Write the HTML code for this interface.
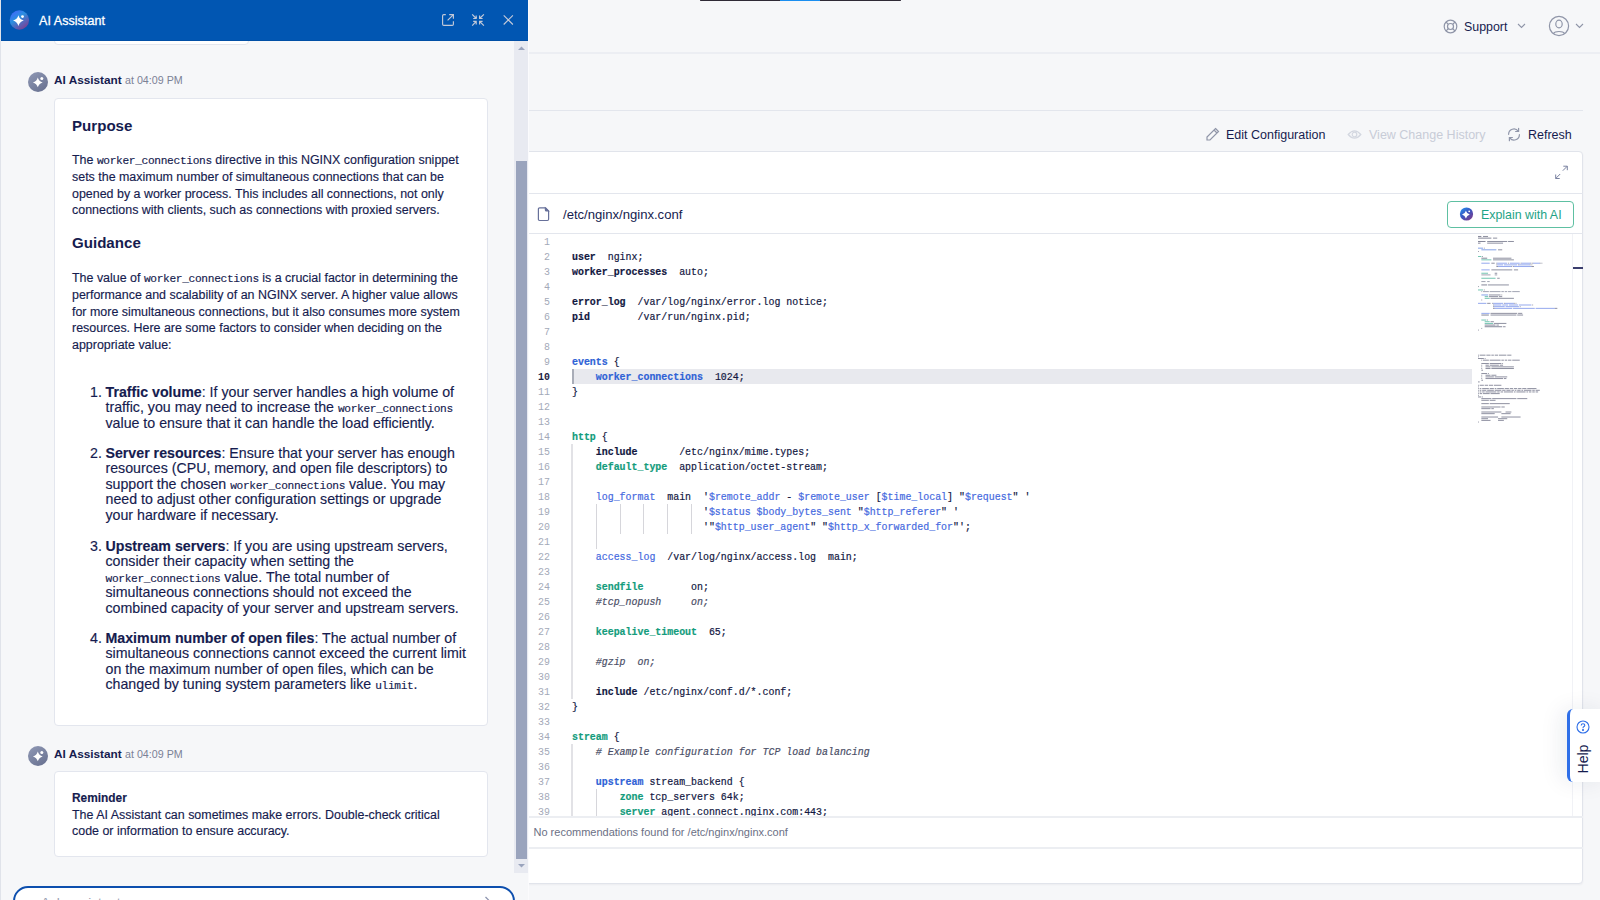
<!DOCTYPE html>
<html><head><meta charset="utf-8">
<style>
*{box-sizing:border-box;margin:0;padding:0}
html,body{width:1600px;height:900px;overflow:hidden;background:#f6f7f9;font-family:"Liberation Sans",sans-serif;color:#161c4f}
.abs{position:absolute}
.hl{position:absolute;height:1px;background:#e3e6ed}
/* main page */
#topbar{left:700px;top:0;width:201px;height:1px;background:#2f2a36;border-radius:1px}
#topbar i{position:absolute;left:80px;top:0;width:40px;height:1px;background:#1a8ef0}
.tbar{position:absolute;top:128px;font-size:12.5px;white-space:nowrap}
#card{left:400px;top:151px;width:1183px;height:733px;box-shadow:0 1px 2px rgba(30,40,80,0.05);background:#fff;border:1px solid #e1e4eb;border-radius:4px}
.mono{font-family:"Liberation Mono",monospace}
#code{position:absolute;left:0;top:234px;width:1600px}
.ln{position:absolute;left:520px;padding-top:1px;width:30px;text-align:right;font-size:11px;transform:scaleX(0.9018);transform-origin:100% 0;color:#a3a9b8;font-family:"Liberation Mono",monospace;line-height:15px}
.cl{position:absolute;left:571.9px;padding-top:1px;font-size:11px;font-family:"Liberation Mono",monospace;line-height:15px;white-space:pre;color:#12173f;transform:scaleX(0.9018);transform-origin:0 0;-webkit-text-stroke:0.2px currentColor}
.b{font-weight:bold}
.tB{font-weight:bold}
.tb{color:#4569e0}
.tbb{color:#2f62d6;font-weight:bold}
.tg{color:#139c7c;font-weight:bold}
.ts{color:#4569e0}
.tc{color:#4a4e66;font-style:italic}
.ln.cur{color:#1c2040;font-weight:bold}
#mm{position:absolute;left:1478px;top:233.8px}
.guide{position:absolute;width:1px;background:#d6d6db}
.guide.g0{width:2px;background:#e2e2e6}
/* panel */
#panel{position:absolute;left:0;top:0;width:529px;height:900px;background:#f6f7f9;border-left:1px solid #e0e3ea;border-right:1px solid #fbfbfd}
#phead{position:absolute;left:1px;top:0;width:527px;height:41px;background:#0156b2;border-bottom:1.5px solid #014fa6}
.card{position:absolute;background:#fff;border:1px solid #e3e6ee;border-radius:4px}
.pt{position:absolute;white-space:nowrap}
.c{font-family:"Liberation Mono",monospace;font-size:11.2px;letter-spacing:-0.33px}
.h{font-size:15.1px;font-weight:bold;color:#161c4f}
.para{font-size:12.45px;line-height:16.8px;color:#161c4f;-webkit-text-stroke:0.15px #161c4f}
.li{font-size:14.2px;line-height:15.4px;color:#161c4f;-webkit-text-stroke:0.15px #161c4f}
.li .c{font-size:11.2px}
.c{line-height:1px}
</style></head><body>
<!-- top bar -->
<div id="topbar" class="abs"><i></i></div>
<div class="hl" style="left:0;top:52px;width:1600px;height:2px;background:#eceef3"></div>
<div class="hl" style="left:0;top:110px;width:1583px"></div>

<!-- support / user -->
<svg class="abs" style="left:1443px;top:19px" width="15" height="15" viewBox="0 0 15 15" fill="none" stroke="#8f95a8" stroke-width="1.2"><circle cx="7.5" cy="7.5" r="6.3"/><circle cx="7.5" cy="7.5" r="3"/><path d="M3 3L5.3 5.3M12 3L9.7 5.3M3 12L5.3 9.7M12 12L9.7 9.7"/></svg>
<div class="pt" style="left:1464px;top:20px;font-size:12.4px;color:#161c4f">Support</div>
<svg class="abs" style="left:1517px;top:23px" width="9" height="6" viewBox="0 0 9 6" fill="none" stroke="#8f95a8" stroke-width="1.1"><path d="M1 1L4.5 4.5L8 1"/></svg>
<svg class="abs" style="left:1548px;top:15px" width="22" height="22" viewBox="0 0 22 22" fill="none" stroke="#8f95a8" stroke-width="1.2"><circle cx="11" cy="11" r="9.6"/><ellipse cx="11" cy="9" rx="3.2" ry="3.8"/><path d="M5.5 18.5C7 15.8 15 15.8 16.5 18.5"/></svg>
<svg class="abs" style="left:1575px;top:23px" width="9" height="6" viewBox="0 0 9 6" fill="none" stroke="#8f95a8" stroke-width="1.1"><path d="M1 1L4.5 4.5L8 1"/></svg>

<!-- toolbar -->
<svg class="abs" style="left:1205px;top:127px" width="15" height="15" viewBox="0 0 15 15" fill="none" stroke="#8f95a8" stroke-width="1.2"><path d="M10.5 1.5L13.5 4.5L5 13H2V10Z M9 3L12 6"/></svg>
<div class="tbar" style="left:1226px;color:#161c4f">Edit Configuration</div>
<svg class="abs" style="left:1347px;top:128px" width="15" height="13" viewBox="0 0 15 13" fill="none" stroke="#d3d7e0" stroke-width="1.2"><path d="M1.2 6.5Q7.5 -0.8 13.8 6.5Q7.5 13.8 1.2 6.5Z"/><circle cx="7.5" cy="6.5" r="2.3"/></svg>
<div class="tbar" style="left:1369px;color:#c8ccd7">View Change History</div>
<svg class="abs" style="left:1507px;top:127px" width="14" height="15" viewBox="0 0 14 15" fill="none" stroke="#9096aa" stroke-width="1.2" stroke-linecap="round"><path d="M1.6 7.3A5.3 5.3 0 0 1 11.2 4.2M12.4 7.7A5.3 5.3 0 0 1 2.8 10.8M11.6 1.3V4.5H8.6M2.4 13.7V10.5H5.4"/></svg>
<div class="tbar" style="left:1528px;color:#161c4f">Refresh</div>

<!-- card -->
<div id="card" class="abs"></div>
<div class="hl" style="left:400px;top:193px;width:1183px"></div>
<div class="hl" style="left:400px;top:233px;width:1183px"></div>
<svg class="abs" style="left:1553px;top:164px" width="16" height="16" viewBox="0 0 16 16" fill="none" stroke="#7a82a0" stroke-width="1"><path d="M10.3 2.2H14.3V6.2M14.3 2.2L9.8 6.7M6.7 14.5H2.7V10.5M2.7 14.5L7.2 10"/></svg>
<svg class="abs" style="left:537px;top:206px" width="13" height="16" viewBox="0 0 13 16" fill="none" stroke="#67709a" stroke-width="1.2"><path d="M2.6 1.9H8.6L11.6 4.9V13.3Q11.6 14.5 10.4 14.5H2.6Q1.4 14.5 1.4 13.3V3.1Q1.4 1.9 2.6 1.9Z"/><path d="M8.4 2.2V4Q8.4 5 9.4 5H11.3Z" fill="#67709a"/></svg>
<div class="pt" style="left:563px;top:207px;font-size:13.1px;color:#161c4f">/etc/nginx/nginx.conf</div>
<div class="abs" style="left:1447px;top:201px;width:127px;height:27px;border:1.6px solid #5ec0a2;border-radius:4px"></div>

<svg class="abs" style="left:1459px;top:207px" width="15" height="15" viewBox="0 0 15 15"><defs><linearGradient id="g3" x1="0.15" y1="0.1" x2="0.85" y2="0.95"><stop offset="0" stop-color="#2a86e6"/><stop offset="0.45" stop-color="#3b55c0"/><stop offset="1" stop-color="#7b3c8c"/></linearGradient></defs><circle cx="7.5" cy="7" r="6.6" fill="url(#g3)"/><path d="M6.90 3.70Q7.76 6.74 10.80 7.60Q7.76 8.46 6.90 11.50Q6.04 8.46 3.00 7.60Q6.04 6.74 6.90 3.70Z" fill="#fff"/><circle cx="10.2" cy="4.3" r="0.9" fill="#fff"/></svg>
<div class="pt" style="left:1481px;top:208px;font-size:12.4px;color:#1ea386">Explain with AI</div>

<div class="abs" style="left:572px;top:369px;width:900px;height:15px;background:#e8e9ee"></div>
<div class="abs" style="left:572px;top:369px;width:2px;height:15px;background:#a9adb8"></div>
<div class="guide g0" style="left:571px;top:444px;height:255px"></div>
<div class="guide" style="left:596px;top:504px;height:45px"></div>
<div class="guide" style="left:620px;top:504px;height:30px"></div>
<div class="guide" style="left:643px;top:504px;height:30px"></div>
<div class="guide" style="left:667px;top:504px;height:30px"></div>
<div class="guide" style="left:691px;top:504px;height:30px"></div>
<div class="guide g0" style="left:571px;top:744px;height:75px"></div>
<div class="guide" style="left:596px;top:789px;height:30px"></div>
<div class="ln" style="top:234px">1</div>
<div class="ln" style="top:249px">2</div>
<div class="cl" style="top:249px"><span class="tB">user</span>  nginx;</div>
<div class="ln" style="top:264px">3</div>
<div class="cl" style="top:264px"><span class="tB">worker_processes</span>  auto;</div>
<div class="ln" style="top:279px">4</div>
<div class="ln" style="top:294px">5</div>
<div class="cl" style="top:294px"><span class="tB">error_log</span>  /var/log/nginx/error.log notice;</div>
<div class="ln" style="top:309px">6</div>
<div class="cl" style="top:309px"><span class="tB">pid</span>        /var/run/nginx.pid;</div>
<div class="ln" style="top:324px">7</div>
<div class="ln" style="top:339px">8</div>
<div class="ln" style="top:354px">9</div>
<div class="cl" style="top:354px"><span class="tbb">events</span> {</div>
<div class="ln cur" style="top:369px">10</div>
<div class="cl" style="top:369px">    <span class="tbb">worker_connections</span>  1024;</div>
<div class="ln" style="top:384px">11</div>
<div class="cl" style="top:384px">}</div>
<div class="ln" style="top:399px">12</div>
<div class="ln" style="top:414px">13</div>
<div class="ln" style="top:429px">14</div>
<div class="cl" style="top:429px"><span class="tg">http</span> {</div>
<div class="ln" style="top:444px">15</div>
<div class="cl" style="top:444px">    <span class="tB">include</span>       /etc/nginx/mime.types;</div>
<div class="ln" style="top:459px">16</div>
<div class="cl" style="top:459px">    <span class="tg">default_type</span>  application/octet-stream;</div>
<div class="ln" style="top:474px">17</div>
<div class="ln" style="top:489px">18</div>
<div class="cl" style="top:489px">    <span class="tb">log_format</span>  main  '<span class="ts">$remote_addr</span> - <span class="ts">$remote_user</span> [<span class="ts">$time_local</span>] "<span class="ts">$request</span>" '</div>
<div class="ln" style="top:504px">19</div>
<div class="cl" style="top:504px">                      '<span class="ts">$status</span> <span class="ts">$body_bytes_sent</span> "<span class="ts">$http_referer</span>" '</div>
<div class="ln" style="top:519px">20</div>
<div class="cl" style="top:519px">                      '"<span class="ts">$http_user_agent</span>" "<span class="ts">$http_x_forwarded_for</span>"';</div>
<div class="ln" style="top:534px">21</div>
<div class="ln" style="top:549px">22</div>
<div class="cl" style="top:549px">    <span class="tb">access_log</span>  /var/log/nginx/access.log  main;</div>
<div class="ln" style="top:564px">23</div>
<div class="ln" style="top:579px">24</div>
<div class="cl" style="top:579px">    <span class="tg">sendfile</span>        on;</div>
<div class="ln" style="top:594px">25</div>
<div class="cl" style="top:594px">    <span class="tc">#tcp_nopush     on;</span></div>
<div class="ln" style="top:609px">26</div>
<div class="ln" style="top:624px">27</div>
<div class="cl" style="top:624px">    <span class="tg">keepalive_timeout</span>  65;</div>
<div class="ln" style="top:639px">28</div>
<div class="ln" style="top:654px">29</div>
<div class="cl" style="top:654px">    <span class="tc">#gzip  on;</span></div>
<div class="ln" style="top:669px">30</div>
<div class="ln" style="top:684px">31</div>
<div class="cl" style="top:684px">    <span class="tB">include</span> /etc/nginx/conf.d/*.conf;</div>
<div class="ln" style="top:699px">32</div>
<div class="cl" style="top:699px">}</div>
<div class="ln" style="top:714px">33</div>
<div class="ln" style="top:729px">34</div>
<div class="cl" style="top:729px"><span class="tg">stream</span> {</div>
<div class="ln" style="top:744px">35</div>
<div class="cl" style="top:744px">    <span class="tc"># Example configuration for TCP load balancing</span></div>
<div class="ln" style="top:759px">36</div>
<div class="ln" style="top:774px">37</div>
<div class="cl" style="top:774px">    <span class="tbb">upstream</span> stream_backend {</div>
<div class="ln" style="top:789px">38</div>
<div class="cl" style="top:789px">        <span class="tg">zone</span> tcp_servers 64k;</div>
<div class="ln" style="top:804px">39</div>
<div class="cl" style="top:804px">        <span class="tg">server</span> agent.connect.nginx.com:443;</div>
<svg id="mm" width="120" height="200" viewBox="0 0 120 200" shape-rendering="geometricPrecision"><rect x="0.00" y="1.97" width="3.34" height="0.95" fill="rgba(22,26,60,0.55)"/><rect x="5.01" y="1.97" width="5.01" height="0.95" fill="rgba(22,26,60,0.5)"/><rect x="0.00" y="3.64" width="13.36" height="0.95" fill="rgba(22,26,60,0.55)"/><rect x="15.03" y="3.64" width="4.17" height="0.95" fill="rgba(22,26,60,0.5)"/><rect x="0.00" y="6.99" width="7.51" height="0.95" fill="rgba(22,26,60,0.55)"/><rect x="9.18" y="6.99" width="20.04" height="0.95" fill="rgba(22,26,60,0.5)"/><rect x="30.06" y="6.99" width="5.84" height="0.95" fill="rgba(22,26,60,0.5)"/><rect x="0.00" y="8.66" width="2.50" height="0.95" fill="rgba(22,26,60,0.55)"/><rect x="9.18" y="8.66" width="15.86" height="0.95" fill="rgba(22,26,60,0.5)"/><rect x="0.00" y="13.68" width="5.01" height="0.95" fill="rgba(47,98,214,0.62)"/><rect x="5.84" y="13.68" width="0.83" height="0.95" fill="rgba(22,26,60,0.5)"/><rect x="3.34" y="15.35" width="15.03" height="0.95" fill="rgba(47,98,214,0.62)"/><rect x="20.04" y="15.35" width="4.17" height="0.95" fill="rgba(22,26,60,0.5)"/><rect x="0.00" y="17.02" width="0.83" height="0.95" fill="rgba(22,26,60,0.5)"/><rect x="0.00" y="22.04" width="3.34" height="0.95" fill="rgba(19,156,124,0.62)"/><rect x="4.17" y="22.04" width="0.83" height="0.95" fill="rgba(22,26,60,0.5)"/><rect x="3.34" y="23.71" width="5.84" height="0.95" fill="rgba(22,26,60,0.55)"/><rect x="15.03" y="23.71" width="18.37" height="0.95" fill="rgba(22,26,60,0.5)"/><rect x="3.34" y="25.38" width="10.02" height="0.95" fill="rgba(19,156,124,0.62)"/><rect x="15.03" y="25.38" width="20.88" height="0.95" fill="rgba(22,26,60,0.5)"/><rect x="3.34" y="28.72" width="8.35" height="0.95" fill="rgba(70,105,225,0.6)"/><rect x="13.36" y="28.72" width="3.34" height="0.95" fill="rgba(22,26,60,0.5)"/><rect x="18.37" y="28.72" width="0.83" height="0.95" fill="rgba(22,26,60,0.5)"/><rect x="19.20" y="28.72" width="10.02" height="0.95" fill="rgba(70,105,225,0.6)"/><rect x="30.06" y="28.72" width="0.83" height="0.95" fill="rgba(22,26,60,0.5)"/><rect x="31.73" y="28.72" width="10.02" height="0.95" fill="rgba(70,105,225,0.6)"/><rect x="42.59" y="28.72" width="0.83" height="0.95" fill="rgba(22,26,60,0.5)"/><rect x="43.42" y="28.72" width="9.18" height="0.95" fill="rgba(70,105,225,0.6)"/><rect x="52.60" y="28.72" width="0.83" height="0.95" fill="rgba(22,26,60,0.5)"/><rect x="54.27" y="28.72" width="0.83" height="0.95" fill="rgba(22,26,60,0.5)"/><rect x="55.11" y="28.72" width="6.68" height="0.95" fill="rgba(70,105,225,0.6)"/><rect x="61.79" y="28.72" width="0.83" height="0.95" fill="rgba(22,26,60,0.5)"/><rect x="63.46" y="28.72" width="0.83" height="0.95" fill="rgba(22,26,60,0.5)"/><rect x="18.37" y="30.40" width="0.83" height="0.95" fill="rgba(22,26,60,0.5)"/><rect x="19.20" y="30.40" width="5.84" height="0.95" fill="rgba(70,105,225,0.6)"/><rect x="25.88" y="30.40" width="13.36" height="0.95" fill="rgba(70,105,225,0.6)"/><rect x="40.08" y="30.40" width="0.83" height="0.95" fill="rgba(22,26,60,0.5)"/><rect x="40.91" y="30.40" width="10.86" height="0.95" fill="rgba(70,105,225,0.6)"/><rect x="51.77" y="30.40" width="0.83" height="0.95" fill="rgba(22,26,60,0.5)"/><rect x="53.44" y="30.40" width="0.83" height="0.95" fill="rgba(22,26,60,0.5)"/><rect x="18.37" y="32.07" width="1.67" height="0.95" fill="rgba(22,26,60,0.5)"/><rect x="20.04" y="32.07" width="13.36" height="0.95" fill="rgba(70,105,225,0.6)"/><rect x="33.40" y="32.07" width="0.83" height="0.95" fill="rgba(22,26,60,0.5)"/><rect x="35.07" y="32.07" width="0.83" height="0.95" fill="rgba(22,26,60,0.5)"/><rect x="35.91" y="32.07" width="17.54" height="0.95" fill="rgba(70,105,225,0.6)"/><rect x="53.44" y="32.07" width="2.50" height="0.95" fill="rgba(22,26,60,0.5)"/><rect x="3.34" y="35.41" width="8.35" height="0.95" fill="rgba(70,105,225,0.6)"/><rect x="13.36" y="35.41" width="20.88" height="0.95" fill="rgba(22,26,60,0.5)"/><rect x="35.91" y="35.41" width="4.17" height="0.95" fill="rgba(22,26,60,0.5)"/><rect x="3.34" y="38.76" width="6.68" height="0.95" fill="rgba(19,156,124,0.62)"/><rect x="16.70" y="38.76" width="2.50" height="0.95" fill="rgba(22,26,60,0.5)"/><rect x="3.34" y="40.43" width="9.18" height="0.95" fill="rgba(60,65,95,0.5)"/><rect x="16.70" y="40.43" width="2.50" height="0.95" fill="rgba(60,65,95,0.5)"/><rect x="3.34" y="43.77" width="14.20" height="0.95" fill="rgba(19,156,124,0.62)"/><rect x="19.20" y="43.77" width="2.50" height="0.95" fill="rgba(22,26,60,0.5)"/><rect x="3.34" y="47.12" width="4.17" height="0.95" fill="rgba(60,65,95,0.5)"/><rect x="9.18" y="47.12" width="2.50" height="0.95" fill="rgba(60,65,95,0.5)"/><rect x="3.34" y="50.46" width="5.84" height="0.95" fill="rgba(22,26,60,0.55)"/><rect x="10.02" y="50.46" width="20.88" height="0.95" fill="rgba(22,26,60,0.5)"/><rect x="0.00" y="52.13" width="0.83" height="0.95" fill="rgba(22,26,60,0.5)"/><rect x="0.00" y="55.48" width="5.01" height="0.95" fill="rgba(19,156,124,0.62)"/><rect x="5.84" y="55.48" width="0.83" height="0.95" fill="rgba(22,26,60,0.5)"/><rect x="3.34" y="57.15" width="0.83" height="0.95" fill="rgba(60,65,95,0.5)"/><rect x="5.01" y="57.15" width="5.84" height="0.95" fill="rgba(60,65,95,0.5)"/><rect x="11.69" y="57.15" width="10.86" height="0.95" fill="rgba(60,65,95,0.5)"/><rect x="23.38" y="57.15" width="2.50" height="0.95" fill="rgba(60,65,95,0.5)"/><rect x="26.72" y="57.15" width="2.50" height="0.95" fill="rgba(60,65,95,0.5)"/><rect x="30.06" y="57.15" width="3.34" height="0.95" fill="rgba(60,65,95,0.5)"/><rect x="34.23" y="57.15" width="7.51" height="0.95" fill="rgba(60,65,95,0.5)"/><rect x="3.34" y="60.49" width="6.68" height="0.95" fill="rgba(47,98,214,0.62)"/><rect x="10.86" y="60.49" width="11.69" height="0.95" fill="rgba(22,26,60,0.5)"/><rect x="23.38" y="60.49" width="0.83" height="0.95" fill="rgba(22,26,60,0.5)"/><rect x="6.68" y="62.16" width="3.34" height="0.95" fill="rgba(19,156,124,0.62)"/><rect x="10.86" y="62.16" width="9.18" height="0.95" fill="rgba(22,26,60,0.5)"/><rect x="20.88" y="62.16" width="3.34" height="0.95" fill="rgba(22,26,60,0.5)"/><rect x="6.68" y="63.84" width="5.01" height="0.95" fill="rgba(19,156,124,0.62)"/><rect x="12.52" y="63.84" width="23.38" height="0.95" fill="rgba(22,26,60,0.5)"/><rect x="3.34" y="65.51" width="0.83" height="0.95" fill="rgba(22,26,60,0.5)"/><rect x="0.00" y="68.85" width="8.35" height="0.95" fill="rgba(70,105,225,0.6)"/><rect x="9.18" y="68.85" width="3.34" height="0.95" fill="rgba(22,26,60,0.5)"/><rect x="14.20" y="68.85" width="0.83" height="0.95" fill="rgba(22,26,60,0.5)"/><rect x="15.03" y="68.85" width="10.02" height="0.95" fill="rgba(70,105,225,0.6)"/><rect x="25.88" y="68.85" width="0.83" height="0.95" fill="rgba(22,26,60,0.5)"/><rect x="26.72" y="68.85" width="9.18" height="0.95" fill="rgba(70,105,225,0.6)"/><rect x="35.91" y="68.85" width="0.83" height="0.95" fill="rgba(22,26,60,0.5)"/><rect x="37.57" y="68.85" width="0.83" height="0.95" fill="rgba(22,26,60,0.5)"/><rect x="15.03" y="70.52" width="0.83" height="0.95" fill="rgba(22,26,60,0.5)"/><rect x="15.86" y="70.52" width="7.51" height="0.95" fill="rgba(70,105,225,0.6)"/><rect x="24.21" y="70.52" width="5.84" height="0.95" fill="rgba(70,105,225,0.6)"/><rect x="30.89" y="70.52" width="9.18" height="0.95" fill="rgba(70,105,225,0.6)"/><rect x="40.91" y="70.52" width="12.52" height="0.95" fill="rgba(70,105,225,0.6)"/><rect x="54.27" y="70.52" width="0.83" height="0.95" fill="rgba(22,26,60,0.5)"/><rect x="15.03" y="72.20" width="0.83" height="0.95" fill="rgba(22,26,60,0.5)"/><rect x="15.86" y="72.20" width="10.86" height="0.95" fill="rgba(70,105,225,0.6)"/><rect x="27.55" y="72.20" width="13.36" height="0.95" fill="rgba(70,105,225,0.6)"/><rect x="41.75" y="72.20" width="0.83" height="0.95" fill="rgba(22,26,60,0.5)"/><rect x="15.03" y="73.87" width="1.67" height="0.95" fill="rgba(22,26,60,0.5)"/><rect x="16.70" y="73.87" width="17.54" height="0.95" fill="rgba(70,105,225,0.6)"/><rect x="35.07" y="73.87" width="21.71" height="0.95" fill="rgba(70,105,225,0.6)"/><rect x="57.61" y="73.87" width="19.20" height="0.95" fill="rgba(70,105,225,0.6)"/><rect x="76.82" y="73.87" width="2.50" height="0.95" fill="rgba(22,26,60,0.5)"/><rect x="3.34" y="78.88" width="8.35" height="0.95" fill="rgba(70,105,225,0.6)"/><rect x="12.52" y="78.88" width="26.72" height="0.95" fill="rgba(22,26,60,0.5)"/><rect x="40.08" y="78.88" width="4.17" height="0.95" fill="rgba(22,26,60,0.5)"/><rect x="3.34" y="80.56" width="7.51" height="0.95" fill="rgba(22,26,60,0.55)"/><rect x="12.52" y="80.56" width="25.88" height="0.95" fill="rgba(22,26,60,0.5)"/><rect x="39.24" y="80.56" width="5.84" height="0.95" fill="rgba(22,26,60,0.5)"/><rect x="3.34" y="85.57" width="5.01" height="0.95" fill="rgba(19,156,124,0.62)"/><rect x="9.18" y="85.57" width="0.83" height="0.95" fill="rgba(22,26,60,0.5)"/><rect x="6.68" y="87.24" width="5.01" height="0.95" fill="rgba(19,156,124,0.62)"/><rect x="12.52" y="87.24" width="3.34" height="0.95" fill="rgba(22,26,60,0.5)"/><rect x="6.68" y="88.92" width="8.35" height="0.95" fill="rgba(19,156,124,0.62)"/><rect x="15.86" y="88.92" width="12.52" height="0.95" fill="rgba(22,26,60,0.5)"/><rect x="6.68" y="90.59" width="10.86" height="0.95" fill="rgba(22,26,60,0.55)"/><rect x="18.37" y="90.59" width="2.50" height="0.95" fill="rgba(22,26,60,0.5)"/><rect x="6.68" y="92.26" width="17.54" height="0.95" fill="rgba(22,26,60,0.55)"/><rect x="25.05" y="92.26" width="2.50" height="0.95" fill="rgba(22,26,60,0.5)"/><rect x="3.34" y="93.93" width="0.83" height="0.95" fill="rgba(22,26,60,0.5)"/><rect x="0.00" y="95.60" width="0.83" height="0.95" fill="rgba(22,26,60,0.5)"/><rect x="0.00" y="120.68" width="0.83" height="0.95" fill="rgba(22,26,60,0.5)"/><rect x="1.67" y="120.68" width="5.84" height="0.95" fill="rgba(22,26,60,0.5)"/><rect x="8.35" y="120.68" width="4.17" height="0.95" fill="rgba(22,26,60,0.5)"/><rect x="13.36" y="120.68" width="2.50" height="0.95" fill="rgba(22,26,60,0.5)"/><rect x="16.70" y="120.68" width="3.34" height="0.95" fill="rgba(22,26,60,0.5)"/><rect x="20.88" y="120.68" width="7.51" height="0.95" fill="rgba(22,26,60,0.5)"/><rect x="29.22" y="120.68" width="4.17" height="0.95" fill="rgba(22,26,60,0.5)"/><rect x="0.00" y="122.36" width="0.83" height="0.95" fill="rgba(22,26,60,0.5)"/><rect x="0.00" y="124.03" width="5.84" height="0.95" fill="rgba(22,26,60,0.5)"/><rect x="6.68" y="124.03" width="0.83" height="0.95" fill="rgba(22,26,60,0.5)"/><rect x="3.34" y="125.70" width="0.83" height="0.95" fill="rgba(22,26,60,0.5)"/><rect x="5.01" y="125.70" width="5.84" height="0.95" fill="rgba(22,26,60,0.5)"/><rect x="11.69" y="125.70" width="10.86" height="0.95" fill="rgba(22,26,60,0.5)"/><rect x="23.38" y="125.70" width="2.50" height="0.95" fill="rgba(22,26,60,0.5)"/><rect x="26.72" y="125.70" width="2.50" height="0.95" fill="rgba(22,26,60,0.5)"/><rect x="30.06" y="125.70" width="3.34" height="0.95" fill="rgba(22,26,60,0.5)"/><rect x="34.23" y="125.70" width="7.51" height="0.95" fill="rgba(22,26,60,0.5)"/><rect x="3.34" y="129.04" width="7.51" height="0.95" fill="rgba(22,26,60,0.5)"/><rect x="11.69" y="129.04" width="11.69" height="0.95" fill="rgba(22,26,60,0.5)"/><rect x="24.21" y="129.04" width="0.83" height="0.95" fill="rgba(22,26,60,0.5)"/><rect x="3.34" y="130.72" width="0.83" height="0.95" fill="rgba(22,26,60,0.5)"/><rect x="7.51" y="130.72" width="3.34" height="0.95" fill="rgba(22,26,60,0.5)"/><rect x="11.69" y="130.72" width="9.18" height="0.95" fill="rgba(22,26,60,0.5)"/><rect x="21.71" y="130.72" width="3.34" height="0.95" fill="rgba(22,26,60,0.5)"/><rect x="3.34" y="132.39" width="0.83" height="0.95" fill="rgba(22,26,60,0.5)"/><rect x="7.51" y="132.39" width="5.01" height="0.95" fill="rgba(22,26,60,0.5)"/><rect x="13.36" y="132.39" width="22.54" height="0.95" fill="rgba(22,26,60,0.5)"/><rect x="3.34" y="134.06" width="0.83" height="0.95" fill="rgba(22,26,60,0.5)"/><rect x="7.51" y="134.06" width="5.01" height="0.95" fill="rgba(22,26,60,0.5)"/><rect x="13.36" y="134.06" width="22.54" height="0.95" fill="rgba(22,26,60,0.5)"/><rect x="3.34" y="135.73" width="1.67" height="0.95" fill="rgba(22,26,60,0.5)"/><rect x="3.34" y="139.08" width="5.84" height="0.95" fill="rgba(22,26,60,0.5)"/><rect x="10.02" y="139.08" width="0.83" height="0.95" fill="rgba(22,26,60,0.5)"/><rect x="3.34" y="140.75" width="0.83" height="0.95" fill="rgba(22,26,60,0.5)"/><rect x="7.51" y="140.75" width="5.01" height="0.95" fill="rgba(22,26,60,0.5)"/><rect x="13.36" y="140.75" width="5.01" height="0.95" fill="rgba(22,26,60,0.5)"/><rect x="3.34" y="142.42" width="0.83" height="0.95" fill="rgba(22,26,60,0.5)"/><rect x="7.51" y="142.42" width="8.35" height="0.95" fill="rgba(22,26,60,0.5)"/><rect x="16.70" y="142.42" width="12.52" height="0.95" fill="rgba(22,26,60,0.5)"/><rect x="3.34" y="144.09" width="0.83" height="0.95" fill="rgba(22,26,60,0.5)"/><rect x="7.51" y="144.09" width="17.54" height="0.95" fill="rgba(22,26,60,0.5)"/><rect x="25.88" y="144.09" width="2.50" height="0.95" fill="rgba(22,26,60,0.5)"/><rect x="3.34" y="145.76" width="1.67" height="0.95" fill="rgba(22,26,60,0.5)"/><rect x="0.00" y="147.44" width="1.67" height="0.95" fill="rgba(22,26,60,0.5)"/><rect x="0.00" y="150.78" width="0.83" height="0.95" fill="rgba(22,26,60,0.5)"/><rect x="1.67" y="150.78" width="4.17" height="0.95" fill="rgba(22,26,60,0.5)"/><rect x="6.68" y="150.78" width="3.34" height="0.95" fill="rgba(22,26,60,0.5)"/><rect x="10.86" y="150.78" width="4.17" height="0.95" fill="rgba(22,26,60,0.5)"/><rect x="15.86" y="150.78" width="7.51" height="0.95" fill="rgba(22,26,60,0.5)"/><rect x="0.00" y="152.45" width="0.83" height="0.95" fill="rgba(22,26,60,0.5)"/><rect x="0.00" y="154.12" width="0.83" height="0.95" fill="rgba(22,26,60,0.5)"/><rect x="1.67" y="154.12" width="1.67" height="0.95" fill="rgba(22,26,60,0.5)"/><rect x="4.17" y="154.12" width="6.68" height="0.95" fill="rgba(22,26,60,0.5)"/><rect x="11.69" y="154.12" width="4.17" height="0.95" fill="rgba(22,26,60,0.5)"/><rect x="16.70" y="154.12" width="1.67" height="0.95" fill="rgba(22,26,60,0.5)"/><rect x="19.20" y="154.12" width="6.68" height="0.95" fill="rgba(22,26,60,0.5)"/><rect x="26.72" y="154.12" width="4.17" height="0.95" fill="rgba(22,26,60,0.5)"/><rect x="31.73" y="154.12" width="3.34" height="0.95" fill="rgba(22,26,60,0.5)"/><rect x="35.91" y="154.12" width="3.34" height="0.95" fill="rgba(22,26,60,0.5)"/><rect x="40.08" y="154.12" width="3.34" height="0.95" fill="rgba(22,26,60,0.5)"/><rect x="44.25" y="154.12" width="4.17" height="0.95" fill="rgba(22,26,60,0.5)"/><rect x="49.27" y="154.12" width="9.18" height="0.95" fill="rgba(22,26,60,0.5)"/><rect x="0.00" y="155.80" width="0.83" height="0.95" fill="rgba(22,26,60,0.5)"/><rect x="1.67" y="155.80" width="1.67" height="0.95" fill="rgba(22,26,60,0.5)"/><rect x="4.17" y="155.80" width="4.17" height="0.95" fill="rgba(22,26,60,0.5)"/><rect x="9.18" y="155.80" width="6.68" height="0.95" fill="rgba(22,26,60,0.5)"/><rect x="16.70" y="155.80" width="6.68" height="0.95" fill="rgba(22,26,60,0.5)"/><rect x="24.21" y="155.80" width="3.34" height="0.95" fill="rgba(22,26,60,0.5)"/><rect x="28.39" y="155.80" width="4.17" height="0.95" fill="rgba(22,26,60,0.5)"/><rect x="33.40" y="155.80" width="2.50" height="0.95" fill="rgba(22,26,60,0.5)"/><rect x="36.74" y="155.80" width="1.67" height="0.95" fill="rgba(22,26,60,0.5)"/><rect x="39.24" y="155.80" width="3.34" height="0.95" fill="rgba(22,26,60,0.5)"/><rect x="43.42" y="155.80" width="1.67" height="0.95" fill="rgba(22,26,60,0.5)"/><rect x="45.92" y="155.80" width="7.51" height="0.95" fill="rgba(22,26,60,0.5)"/><rect x="54.27" y="155.80" width="2.50" height="0.95" fill="rgba(22,26,60,0.5)"/><rect x="57.61" y="155.80" width="4.17" height="0.95" fill="rgba(22,26,60,0.5)"/><rect x="0.00" y="157.47" width="0.83" height="0.95" fill="rgba(22,26,60,0.5)"/><rect x="1.67" y="157.47" width="1.67" height="0.95" fill="rgba(22,26,60,0.5)"/><rect x="4.17" y="157.47" width="2.50" height="0.95" fill="rgba(22,26,60,0.5)"/><rect x="7.51" y="157.47" width="10.86" height="0.95" fill="rgba(22,26,60,0.5)"/><rect x="19.20" y="157.47" width="2.50" height="0.95" fill="rgba(22,26,60,0.5)"/><rect x="22.54" y="157.47" width="2.50" height="0.95" fill="rgba(22,26,60,0.5)"/><rect x="25.88" y="157.47" width="9.18" height="0.95" fill="rgba(22,26,60,0.5)"/><rect x="35.91" y="157.47" width="1.67" height="0.95" fill="rgba(22,26,60,0.5)"/><rect x="38.41" y="157.47" width="9.18" height="0.95" fill="rgba(22,26,60,0.5)"/><rect x="48.43" y="157.47" width="1.67" height="0.95" fill="rgba(22,26,60,0.5)"/><rect x="50.93" y="157.47" width="2.50" height="0.95" fill="rgba(22,26,60,0.5)"/><rect x="54.27" y="157.47" width="2.50" height="0.95" fill="rgba(22,26,60,0.5)"/><rect x="57.61" y="157.47" width="2.50" height="0.95" fill="rgba(22,26,60,0.5)"/><rect x="0.00" y="159.14" width="0.83" height="0.95" fill="rgba(22,26,60,0.5)"/><rect x="1.67" y="159.14" width="2.50" height="0.95" fill="rgba(22,26,60,0.5)"/><rect x="5.01" y="159.14" width="6.68" height="0.95" fill="rgba(22,26,60,0.5)"/><rect x="12.52" y="159.14" width="9.18" height="0.95" fill="rgba(22,26,60,0.5)"/><rect x="0.00" y="160.81" width="0.83" height="0.95" fill="rgba(22,26,60,0.5)"/><rect x="0.00" y="162.48" width="3.34" height="0.95" fill="rgba(22,26,60,0.5)"/><rect x="4.17" y="162.48" width="0.83" height="0.95" fill="rgba(22,26,60,0.5)"/><rect x="3.34" y="164.16" width="10.02" height="0.95" fill="rgba(22,26,60,0.5)"/><rect x="14.20" y="164.16" width="24.21" height="0.95" fill="rgba(22,26,60,0.5)"/><rect x="39.24" y="164.16" width="10.02" height="0.95" fill="rgba(22,26,60,0.5)"/><rect x="3.34" y="165.83" width="7.51" height="0.95" fill="rgba(22,26,60,0.5)"/><rect x="11.69" y="165.83" width="5.84" height="0.95" fill="rgba(22,26,60,0.5)"/><rect x="3.34" y="169.17" width="7.51" height="0.95" fill="rgba(22,26,60,0.5)"/><rect x="11.69" y="169.17" width="20.04" height="0.95" fill="rgba(22,26,60,0.5)"/><rect x="3.34" y="172.52" width="19.20" height="0.95" fill="rgba(22,26,60,0.5)"/><rect x="23.38" y="172.52" width="3.34" height="0.95" fill="rgba(22,26,60,0.5)"/><rect x="3.34" y="174.19" width="9.18" height="0.95" fill="rgba(22,26,60,0.5)"/><rect x="13.36" y="174.19" width="2.50" height="0.95" fill="rgba(22,26,60,0.5)"/><rect x="3.34" y="177.53" width="20.04" height="0.95" fill="rgba(22,26,60,0.5)"/><rect x="27.55" y="177.53" width="5.84" height="0.95" fill="rgba(22,26,60,0.5)"/><rect x="3.34" y="179.20" width="13.36" height="0.95" fill="rgba(22,26,60,0.5)"/><rect x="23.38" y="179.20" width="9.18" height="0.95" fill="rgba(22,26,60,0.5)"/><rect x="3.34" y="182.55" width="16.70" height="0.95" fill="rgba(22,26,60,0.5)"/><rect x="23.38" y="182.55" width="19.20" height="0.95" fill="rgba(22,26,60,0.5)"/><rect x="3.34" y="184.22" width="6.68" height="0.95" fill="rgba(22,26,60,0.5)"/><rect x="20.04" y="184.22" width="9.18" height="0.95" fill="rgba(22,26,60,0.5)"/><rect x="3.34" y="185.89" width="9.18" height="0.95" fill="rgba(22,26,60,0.5)"/><rect x="20.04" y="185.89" width="5.84" height="0.95" fill="rgba(22,26,60,0.5)"/><rect x="0.00" y="187.56" width="0.83" height="0.95" fill="rgba(22,26,60,0.5)"/></svg>

<div class="abs" style="left:400px;top:816px;width:1172px;height:32px;background:#fff"></div>
<div class="hl" style="left:400px;top:816px;width:1183px;height:2px;background:#eceef2"></div>
<div class="pt" style="left:533.5px;top:826px;font-size:11px;color:#6b7085">No recommendations found for /etc/nginx/nginx.conf</div>
<div class="hl" style="left:400px;top:847px;width:1183px;height:2px;background:#eceef2"></div>

<div class="abs" style="left:1572px;top:234px;width:1px;height:582px;background:#f1f2f6"></div>
<div class="abs" style="left:1573px;top:267.3px;width:10px;height:1.6px;background:#3b3e6e"></div>
<!-- help tab -->
<div class="abs" style="left:1567px;top:709px;width:40px;height:73px;background:#fff;border-left:3px solid #2f6fe8;border-radius:6px 0 0 6px;box-shadow:-6px 0 22px rgba(30,40,80,0.08)"></div>
<svg class="abs" style="left:1576px;top:720px" width="14" height="14" viewBox="0 0 14 14" fill="none" stroke="#2f6fe8" stroke-width="1.1"><circle cx="7" cy="7" r="6"/><path d="M5.2 5.4Q5.2 3.7 7 3.7Q8.8 3.7 8.8 5.3Q8.8 6.3 7.6 6.8Q7 7.1 7 8.2"/><circle cx="7" cy="10" r="0.5" fill="#2f6fe8"/></svg>
<div class="pt" style="left:1568px;top:751px;font-size:14px;color:#161c4f;transform:rotate(-90deg);transform-origin:center;width:30px;text-align:center">Help</div>

<!-- PANEL -->
<div id="panel"></div>
<!-- partial previous card -->
<div class="card" style="left:54px;top:-10px;width:195px;height:55px"></div>
<div id="phead"></div>
<svg class="abs" style="left:9px;top:10px" width="21" height="21" viewBox="0 0 21 21"><defs><linearGradient id="g1" x1="0.2" y1="0.1" x2="0.8" y2="0.95"><stop offset="0" stop-color="#3d6ff5"/><stop offset="0.35" stop-color="#2b8fe0"/><stop offset="0.7" stop-color="#5a62b8"/><stop offset="1" stop-color="#7a3f90"/></linearGradient></defs><circle cx="10.4" cy="10" r="9.7" fill="url(#g1)"/><path d="M9.40 5.20Q10.59 9.41 14.80 10.60Q10.59 11.79 9.40 16.00Q8.21 11.79 4.00 10.60Q8.21 9.41 9.40 5.20Z" fill="#fff"/><circle cx="13.5" cy="6.6" r="1.45" fill="#fff"/></svg>
<div class="pt" style="left:39px;top:14px;font-size:12.5px;color:#fff;letter-spacing:0.05px;-webkit-text-stroke:0.3px #fff">AI Assistant</div>
<svg class="abs" style="left:441px;top:13px" width="14" height="14" viewBox="0 0 14 14" fill="none" stroke="#c3c9d8" stroke-width="1.15"><path d="M4.8 1.6H2.8Q1.6 1.6 1.6 2.8V11.2Q1.6 12.4 2.8 12.4H11.2Q12.4 12.4 12.4 11.2V8.2"/><path d="M8.2 1.6H12.4V5.8M12.4 1.6L6.6 7.4"/></svg>
<svg class="abs" style="left:471px;top:13px" width="14" height="14" viewBox="0 0 14 14" fill="none" stroke="#c3c9d8" stroke-width="1.15"><path d="M1.2 1.3L5.2 5.5M2.2 5.5H5.2V2.5M12.9 1.3L8.6 5.5M11.6 5.5H8.6V2.5M1.2 12.7L5.2 8.4M2.2 8.4H5.2V11.4M12.9 12.7L8.6 8.4M11.6 8.4H8.6V11.4"/></svg>
<svg class="abs" style="left:502px;top:14px" width="12" height="12" viewBox="0 0 12 12" fill="none" stroke="#c3c9d8" stroke-width="1.1"><path d="M1.7 1.3L10.9 10.5M10.9 1.3L1.7 10.5"/></svg>


<!-- message 1 -->
<svg class="abs" style="left:27.5px;top:71.7px" width="20" height="20" viewBox="0 0 20 20"><defs><linearGradient id="g2" x1="0.2" y1="0.1" x2="0.8" y2="0.95"><stop offset="0" stop-color="#8a93b0"/><stop offset="1" stop-color="#6a7392"/></linearGradient></defs><circle cx="10" cy="10" r="10" fill="url(#g2)"/><path d="M9.80 5.50Q10.88 9.32 14.70 10.40Q10.88 11.48 9.80 15.30Q8.72 11.48 4.90 10.40Q8.72 9.32 9.80 5.50Z" fill="#fff"/><circle cx="13.8" cy="6.5" r="1.5" fill="#fff"/></svg>
<div class="pt" style="left:54px;top:73px;font-size:11.8px;font-weight:bold;color:#161c4f">AI Assistant <span style="font-weight:normal;font-size:10.7px;color:#7b8196">at 04:09 PM</span></div>

<div class="card" style="left:54px;top:98px;width:434px;height:628px"></div>
<div class="pt h" style="left:72px;top:117px">Purpose</div>
<div class="pt para" style="left:72px;top:152px">The <span class="c">worker_connections</span> directive in this NGINX configuration snippet<br>sets the maximum number of simultaneous connections that can be<br>opened by a worker process. This includes all connections, not only<br>connections with clients, such as connections with proxied servers.</div>
<div class="pt h" style="left:72px;top:234px">Guidance</div>
<div class="pt para" style="left:72px;top:270px">The value of <span class="c">worker_connections</span> is a crucial factor in determining the<br>performance and scalability of an NGINX server. A higher value allows<br>for more simultaneous connections, but it also consumes more system<br>resources. Here are some factors to consider when deciding on the<br>appropriate value:</div>

<div class="pt li" style="left:90px;top:385px">1.</div>
<div class="pt li" style="left:105.5px;top:385px"><b>Traffic volume</b>: If your server handles a high volume of<br>traffic, you may need to increase the <span class="c">worker_connections</span><br>value to ensure that it can handle the load efficiently.</div>
<div class="pt li" style="left:90px;top:446px">2.</div>
<div class="pt li" style="left:105.5px;top:446px"><b>Server resources</b>: Ensure that your server has enough<br>resources (CPU, memory, and open file descriptors) to<br>support the chosen <span class="c">worker_connections</span> value. You may<br>need to adjust other configuration settings or upgrade<br>your hardware if necessary.</div>
<div class="pt li" style="left:90px;top:539px">3.</div>
<div class="pt li" style="left:105.5px;top:539px"><b>Upstream servers</b>: If you are using upstream servers,<br>consider their capacity when setting the<br><span class="c">worker_connections</span> value. The total number of<br>simultaneous connections should not exceed the<br>combined capacity of your server and upstream servers.</div>
<div class="pt li" style="left:90px;top:631px">4.</div>
<div class="pt li" style="left:105.5px;top:631px"><b>Maximum number of open files</b>: The actual number of<br>simultaneous connections cannot exceed the current limit<br>on the maximum number of open files, which can be<br>changed by tuning system parameters like <span class="c">ulimit</span>.</div>

<!-- message 2 -->
<svg class="abs" style="left:27.5px;top:745.8px" width="20" height="20" viewBox="0 0 20 20"><circle cx="10" cy="10" r="10" fill="url(#g2)"/><path d="M9.80 5.50Q10.88 9.32 14.70 10.40Q10.88 11.48 9.80 15.30Q8.72 11.48 4.90 10.40Q8.72 9.32 9.80 5.50Z" fill="#fff"/><circle cx="13.8" cy="6.5" r="1.5" fill="#fff"/></svg>
<div class="pt" style="left:54px;top:747px;font-size:11.8px;font-weight:bold;color:#161c4f">AI Assistant <span style="font-weight:normal;font-size:10.7px;color:#7b8196">at 04:09 PM</span></div>
<div class="card" style="left:54px;top:771px;width:434px;height:86px"></div>
<div class="pt para" style="left:72px;top:790px;line-height:16.5px"><b style="font-size:11.9px">Reminder</b><br>The AI Assistant can sometimes make errors. Double-check critical<br>code or information to ensure accuracy.</div>

<!-- scrollbar -->
<div class="abs" style="left:514px;top:41px;width:14px;height:832px;background:#e8eaf1"></div>
<div class="abs" style="left:516px;top:161px;width:11px;height:698px;background:#9aa4bd"></div>
<svg class="abs" style="left:516px;top:44px" width="11" height="8" viewBox="0 0 11 8"><path d="M2 6H9L5.5 2.5Z" fill="#9aa4bd"/></svg>
<svg class="abs" style="left:516px;top:862px" width="11" height="8" viewBox="0 0 11 8"><path d="M2 2H9L5.5 5.5Z" fill="#9aa4bd"/></svg>

<!-- input -->
<div class="abs" style="left:13px;top:886px;width:502px;height:40px;background:#fff;border:2px solid #0d4fae;border-radius:15px"></div>
<div class="pt" style="left:41px;top:895px;font-size:13.5px;color:#9aa0b2">Ask assistant...</div>
<svg class="abs" style="left:483px;top:894px" width="10" height="6" viewBox="0 0 10 6" fill="none" stroke="#8a92ad" stroke-width="1.2"><path d="M2.5 3L6 6.5"/></svg>


</body></html>
